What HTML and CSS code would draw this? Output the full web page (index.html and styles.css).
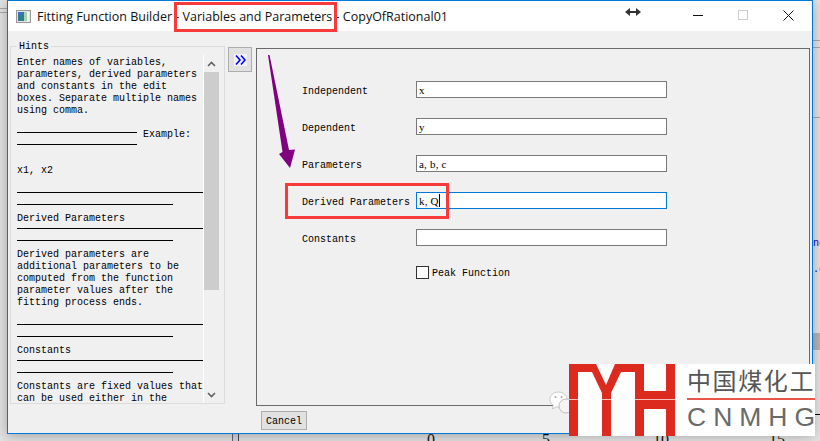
FILE: index.html
```html
<!DOCTYPE html>
<html lang="en">
<head>
<meta charset="utf-8">
<title>Fitting Function Builder</title>
<link rel="stylesheet" href="styles.css">
</head>
<body>
<div class="desktop">
  <div class="bg-line bg-l1"></div>
  <div class="bg-line bg-l2"></div>
  <div class="bg-line bg-r1"></div>
  <div class="bg-line bg-r2"></div>
  <div class="bg-line bg-r3"></div>
  <div class="bg-band"></div>
  <div class="bg-axis"></div>
  <div class="bg-tick"></div>
  <span class="bg-code bg-c1">nd</span>
  <span class="bg-code bg-c2">.e</span>
  <span class="bg-num bg-n0">0</span>
  <span class="bg-num bg-n5">5</span>
  <span class="bg-num bg-n10">10</span>
  <span class="bg-num bg-n15">15</span>

  <section class="window">
    <header class="titlebar">
      <svg class="app-icon" width="15" height="13" viewBox="0 0 15 13">
        <rect x="0.5" y="0.5" width="14" height="12" fill="#e4e4e4" stroke="#9a9a9a"/>
        <rect x="2" y="2" width="6" height="9" fill="#2f7f8f"/>
        <rect x="2" y="2" width="6" height="3" fill="#3b6fc4"/>
        <rect x="8" y="2" width="3" height="9" fill="#a8d4b0"/>
        <rect x="11" y="2" width="2" height="9" fill="#f4f4f4"/>
      </svg>
      <h1 class="title">Fitting Function Builder - Variables and Parameters - CopyOfRational01</h1>
      <svg class="cursor-icon" width="16" height="8" viewBox="0 0 16 8">
        <path d="M0 4 5 0V3H11V0L16 4 11 8V5H5V8Z" fill="#333"/>
      </svg>
      <div class="caption">
        <svg width="10" height="10" viewBox="0 0 10 10"><path d="M0 5.5H10" stroke="#111"/></svg>
        <svg width="10" height="10" viewBox="0 0 10 10"><rect x="0.5" y="0.5" width="9" height="9" fill="none" stroke="#ccc"/></svg>
        <svg width="11" height="11" viewBox="0 0 11 11"><path d="M0.5 0.5 10.5 10.5M10.5 0.5 0.5 10.5" stroke="#111"/></svg>
      </div>
    </header>

    <div class="client">
      <div class="main">
        <fieldset class="hints">
          <legend class="hints-legend">Hints</legend>
          <div class="hints-scroll">
            <div class="hints-text">
              <div class="ln">Enter names of variables,</div>
              <div class="ln">parameters, derived parameters</div>
              <div class="ln">and constants in the edit</div>
              <div class="ln">boxes. Separate multiple names</div>
              <div class="ln">using comma.</div>
              <div class="ln"></div>
              <div class="ln"><i class="rule short"></i> Example:</div>
              <div class="ln"><i class="rule short"></i></div>
              <div class="ln"></div>
              <div class="ln">x1, x2</div>
              <div class="ln"></div>
              <div class="ln"><i class="rule long"></i></div>
              <div class="ln"><i class="rule mid"></i></div>
              <div class="ln">Derived Parameters</div>
              <div class="ln"><i class="rule long"></i></div>
              <div class="ln"><i class="rule mid"></i></div>
              <div class="ln">Derived parameters are</div>
              <div class="ln">additional parameters to be</div>
              <div class="ln">computed from the function</div>
              <div class="ln">parameter values after the</div>
              <div class="ln">fitting process ends.</div>
              <div class="ln"></div>
              <div class="ln"><i class="rule long"></i></div>
              <div class="ln"><i class="rule mid"></i></div>
              <div class="ln">Constants</div>
              <div class="ln"><i class="rule long"></i></div>
              <div class="ln"><i class="rule mid"></i></div>
              <div class="ln">Constants are fixed values that</div>
              <div class="ln">can be used either in the</div>
            </div>
            <div class="scrollbar">
              <svg class="sb-arrow" width="9" height="6" viewBox="0 0 9 6"><path d="M1 5 4.5 1.5 8 5" fill="none" stroke="#606060" stroke-width="1.6"/></svg>
              <div class="sb-thumb"></div>
              <svg class="sb-arrow sb-down" width="9" height="6" viewBox="0 0 9 6"><path d="M1 1 4.5 4.5 8 1" fill="none" stroke="#606060" stroke-width="1.6"/></svg>
            </div>
          </div>
        </fieldset>

        <button class="expand" type="button" aria-label="Expand">
          <svg width="11" height="10" viewBox="0 0 11 10"><path d="M1 0.5 5 5 1 9.5M6 0.5 10 5 6 9.5" fill="none" stroke="#0000ff" stroke-width="1.6"/></svg>
        </button>

        <div class="panel">
          <div class="form">
            <label class="lbl">Independent</label><div class="field">x</div>
            <label class="lbl">Dependent</label><div class="field">y</div>
            <label class="lbl">Parameters</label><div class="field">a, b, c</div>
            <label class="lbl">Derived Parameters</label><div class="field focus">k, Q<span class="caret"></span></div>
            <label class="lbl">Constants</label><div class="field"></div>
            <div class="check-row"><span class="check"></span><span class="check-label">Peak Function</span></div>
          </div>
        </div>
      </div>
      <div class="footer"><button class="btn" type="button">Cancel</button></div>
    </div>
  </section>

  <svg class="purple-arrow" width="32" height="118" viewBox="0 0 32 118">
    <path d="M0 0H1.500L21 95 27 94.500 22 113 11 99 14.500 97Z" fill="#800080"/>
  </svg>
  <div class="mark mark-title"></div>
  <div class="mark mark-field"></div>

  <svg class="wechat" width="22" height="24" viewBox="0 0 22 24">
    <path d="M9.5 1C4.5 1 1 4.200 1 8.500c0 2.500 1.300 4.500 3.200 5.800L3.500 18l3.800-2.200c.8.200 1.500.300 2.200.300 4.700 0 8.500-3.300 8.500-7.600S14.200 1 9.500 1Z" fill="#fff" stroke="#c8c8c8"/>
    <circle cx="17" cy="15" r="7" fill="#f4f4f4" stroke="#bdbdbd"/>
    <circle cx="6.500" cy="6" r="1" fill="#aaa"/><circle cx="12.500" cy="6" r="1" fill="#aaa"/>
  </svg>

  <div class="logo">
    <svg class="logo-mark" width="106" height="72" viewBox="0 0 106 72">
      <path d="M0 0H27L37 21 46 0H75V27H97V0H106V72H97V45H75V72H66V8H52L42 29V72H33V29L23 8H9V72H0Z" fill="#dd2a1f"/>
      <path d="M0 35.500H106" stroke="#fff" stroke-opacity=".7"/>
    </svg>
    <div class="logo-text">
      <div class="logo-cn">中国煤化工</div>
      <div class="logo-rule"></div>
      <div class="logo-en">CNMHG</div>
    </div>
  </div>
</div>
</body>
</html>
```
FILE: styles.css
```css
* { box-sizing: border-box; }
html, body { margin: 0; padding: 0; }
body { width: 820px; height: 441px; overflow: hidden; }

.desktop {
  position: relative;
  width: 820px;
  height: 441px;
  overflow: hidden;
  background: #e2e2e2;
  padding-left: 7px;
  font-family: "Liberation Mono", monospace;
  font-size: 10px;
  color: #000;
}

/* things behind the window */
.bg-line { position: absolute; height: 1px; background: #a8a8a8; }
.bg-l1 { left: 0; top: 8px; width: 7px; }
.bg-l2 { left: 0; top: 12px; width: 7px; }
.bg-r1 { left: 813px; top: 40px; width: 7px; }
.bg-r2 { left: 813px; top: 47px; width: 7px; }
.bg-r3 { left: 813px; top: 117px; width: 7px; }
.bg-band { position: absolute; left: 813px; top: 333px; width: 7px; height: 17px; background: #b4b4b4; }
.bg-axis { position: absolute; left: 232px; top: 434px; width: 7px; height: 7px; background: #d6d6ea; border-left: 1px solid #666; border-right: 1px solid #444; }
.bg-tick { position: absolute; left: 815px; top: 414px; width: 5px; height: 1px; background: #000; }
.bg-code { position: absolute; left: 813px; color: #0000e0; font-size: 10px; line-height: 10px; }
.bg-c1 { top: 239px; }
.bg-c2 { top: 265px; }
.bg-num { position: absolute; top: 431px; font-family: "Liberation Serif", serif; font-size: 16px; line-height: 18px; color: #111; }
.bg-n0 { left: 427px; }
.bg-n5 { left: 542px; }
.bg-n10 { left: 653px; }
.bg-n15 { left: 769px; }

/* window */
.window {
  position: relative;
  width: 806px;
  height: 434px;
  background: #f0f0f0;
  border: 1px solid #0078d7;
  box-shadow: 0 2px 12px rgba(0, 0, 0, .28);
}
.titlebar {
  display: flex;
  align-items: center;
  height: 30px;
  padding-left: 8px;
  background: #fff;
}
.app-icon { flex: none; }
.title {
  margin: 0 0 0 6px;
  font: 400 12.500px "Open Sans", sans-serif;
  color: #111;
  white-space: nowrap;
}
.cursor-icon { position: absolute; left: 617px; top: 7px; }
.caption {
  margin-left: auto;
  display: flex;
  align-items: center;
  gap: 35px;
  padding-right: 18px;
  padding-bottom: 2px;
}

.client { padding-top: 9px; }
.main { display: flex; align-items: flex-start; height: 366px; padding-left: 2px; }

/* hints */
.hints {
  flex: none;
  width: 215px;
  height: 364px;
  margin: 0;
  padding: 3px 5px 0 6px;
  min-width: 0;
  border: 1px solid #dcdcdc;
}
.hints-legend { height: 12px; padding: 0 2px; margin: 0; line-height: 14px; }
.hints-scroll { display: flex; height: 348px; overflow: hidden; }
.hints-text { width: 186px; flex: none; overflow: hidden; }
.ln { height: 12px; line-height: 16px; white-space: pre; display: flex; align-items: flex-start; }
.rule { display: block; height: 1px; margin-top: 5px; background: #000; flex: none; }
.short { width: 120px; }
.long { width: 186px; }
.mid { width: 156px; }
.scrollbar { position: relative; flex: none; width: 16px; border-left: 1px solid #fff; }
.sb-thumb { position: absolute; left: 0; top: 17px; width: 15px; height: 218px; background: #cdcdcd; }
.sb-arrow { position: absolute; left: 3px; top: 6px; }
.sb-down { top: auto; bottom: 5px; }

/* expand button */
.expand {
  flex: none;
  display: flex;
  align-items: center;
  justify-content: center;
  width: 24px;
  height: 25px;
  margin: 7px 0 0 3px;
  padding: 0;
  background: #e1e1e1;
  border: 1px solid #adadad;
}
.expand svg { background: #f2f2f2; box-shadow: 0 0 0 1px #f2f2f2; }

/* main panel */
.panel {
  flex: none;
  width: 554px;
  height: 358px;
  margin: 8px 0 0 4px;
  padding: 32px 0 0 45px;
  border: 1px solid #696969;
}
.form { display: grid; grid-template-columns: 114px 251px; row-gap: 20px; }
.lbl { align-self: center; padding-top: 4px; white-space: nowrap; }
.field {
  display: flex;
  align-items: flex-start;
  height: 17px;
  padding-left: 2px;
  font-family: "Liberation Serif", serif;
  font-size: 11px;
  letter-spacing: .2px;
  line-height: 17px;
  white-space: pre;
  background: #fff;
  border: 1px solid #7a7a7a;
}
.field.focus { border-color: #0078d7; }
.caret { width: 1px; height: 13px; margin-top: 1px; background: #000; }
.check-row { grid-column: 2; display: flex; align-items: center; gap: 3px; height: 13px; }
.check { width: 13px; height: 13px; background: #fff; border: 1px solid #333; }
.check-label { padding-top: 2px; }

/* footer */
.footer { margin: 5px 0 0 253px; }
.btn {
  display: block;
  width: 46px;
  height: 19px;
  padding: 2px 0 0;
  font: inherit;
  color: #000;
  background: #e1e1e1;
  border: 1px solid #adadad;
}

/* annotations */
.purple-arrow { position: absolute; left: 268px; top: 55px; }
.mark { position: absolute; border: 3px solid #f83a3a; }
.mark-title { left: 174px; top: 2px; width: 163px; height: 30px; }
.mark-field { left: 285px; top: 183px; width: 164px; height: 36px; }

/* watermark */
.wechat { position: absolute; left: 549px; top: 391px; }
.logo {
  position: absolute;
  left: 569px;
  top: 364px;
  display: flex;
  gap: 12px;
  width: 246px;
  height: 72px;
  background: #fff;
}
.logo-mark { flex: none; }
.logo-text { display: flex; flex-direction: column; width: 128px; }
.logo-cn {
  margin-top: 2px;
  height: 28px;
  font: 400 24px/28px "Noto Sans CJK SC", sans-serif;
  letter-spacing: 1.600px;
  color: #555;
  white-space: nowrap;
}
.logo-rule { height: 2px; margin-top: 4px; background: #e8534a; }
.logo-en {
  margin-top: 3px;
  font: 400 26.500px/28px "Liberation Sans", sans-serif;
  letter-spacing: 7px;
  color: #6a6a6a;
  white-space: nowrap;
}
```
